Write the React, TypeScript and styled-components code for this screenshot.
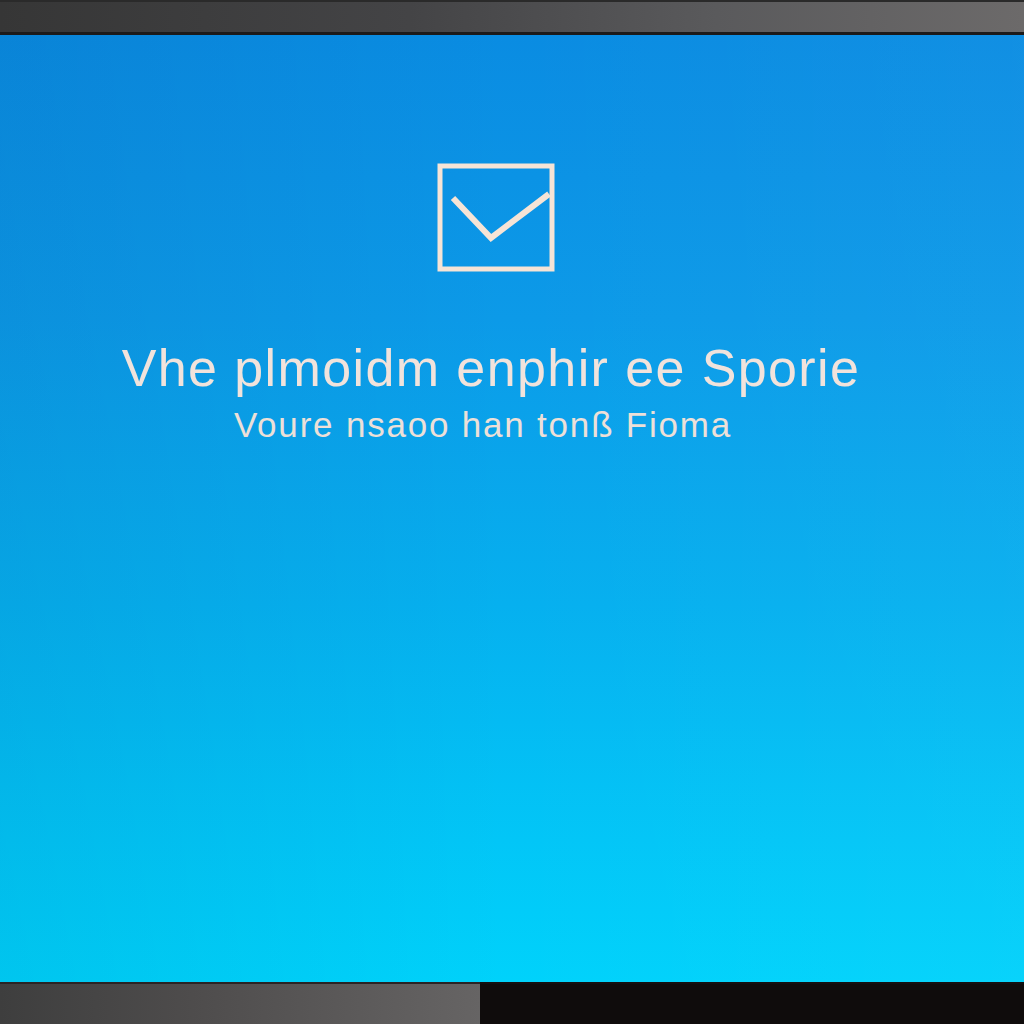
import React from "react";
import styled, { createGlobalStyle } from "styled-components";

const Global = createGlobalStyle`
  html, body { margin: 0; padding: 0; background: #111; }
  body { font-family: "Liberation Sans", Arial, sans-serif; }
`;

const Frame = styled.div`
  width: 1024px;
  height: 1024px;
  display: flex;
  flex-direction: column;
  overflow: hidden;
`;

const TopBezel = styled.div`
  height: 35px;
  flex: none;
  background: linear-gradient(90deg, #363636 0%, #444446 40%, #5a5a5c 70%, #6c6a6a 100%);
  box-shadow: inset 0 -3px 0 #1c1a1a, inset 0 2px 0 #2a2a2a;
`;

const Screen = styled.main`
  flex: 1;
  display: flex;
  flex-direction: column;
  align-items: center;
  padding: 128px 30px 0 0;
  background:
    linear-gradient(90deg, rgba(0, 0, 40, 0.06) 0%, rgba(0,0,0,0) 50%, rgba(255,255,255,0.03) 100%),
    linear-gradient(180deg, #0a8ce2 0%, #0c9ae8 30%, #06b0ef 60%, #02c6f7 85%, #00d2fb 100%);
`;

const CheckBox = styled.svg`
  width: 118px;
  height: 109px;
  margin-left: -2px;
`;

const Title = styled.h1`
  margin: 66px 0 0 0;
  padding-right: 12px;
  font-family: "Liberation Sans", Arial, sans-serif;
  font-weight: 400;
  font-size: 52px;
  line-height: 60px;
  letter-spacing: 1.4px;
  color: #f1e3dc;
  white-space: nowrap;
`;

const Subtitle = styled.p`
  margin: 6px 0 0 0;
  padding-right: 28px;
  font-family: "Liberation Sans", Arial, sans-serif;
  font-size: 35px;
  line-height: 42px;
  letter-spacing: 1.8px;
  color: #ede0d8;
  white-space: nowrap;
`;

const BottomBezel = styled.div`
  height: 42px;
  flex: none;
  display: grid;
  grid-template-columns: 480px 1fr;
  box-shadow: inset 0 2px 0 #1a1616;
`;

const BezelLeft = styled.div`
  background: linear-gradient(90deg, #3e3e3e 0%, #4e4c4c 40%, #666464 100%);
  border-top: 2px solid #2a2424;
`;

const BezelRight = styled.div`
  background: #0f0c0c;
  border-top: 2px solid #141010;
`;

export default function App() {
  return (
    <>
      <Global />
      <Frame>
        <TopBezel />
        <Screen>
          <CheckBox viewBox="0 0 118 109">
            <rect x="3" y="3" width="112" height="103" fill="none" stroke="#f6e4d6" strokeWidth="5" />
            <path d="M16 35 L54 75 L112 31" fill="none" stroke="#f6e4d6" strokeWidth="6" strokeLinejoin="miter" />
          </CheckBox>
          <Title>Vhe plmoidm enphir ee Sporie</Title>
          <Subtitle>Voure nsaoo han tonß Fioma</Subtitle>
        </Screen>
        <BottomBezel>
          <BezelLeft />
          <BezelRight />
        </BottomBezel>
      </Frame>
    </>
  );
}
